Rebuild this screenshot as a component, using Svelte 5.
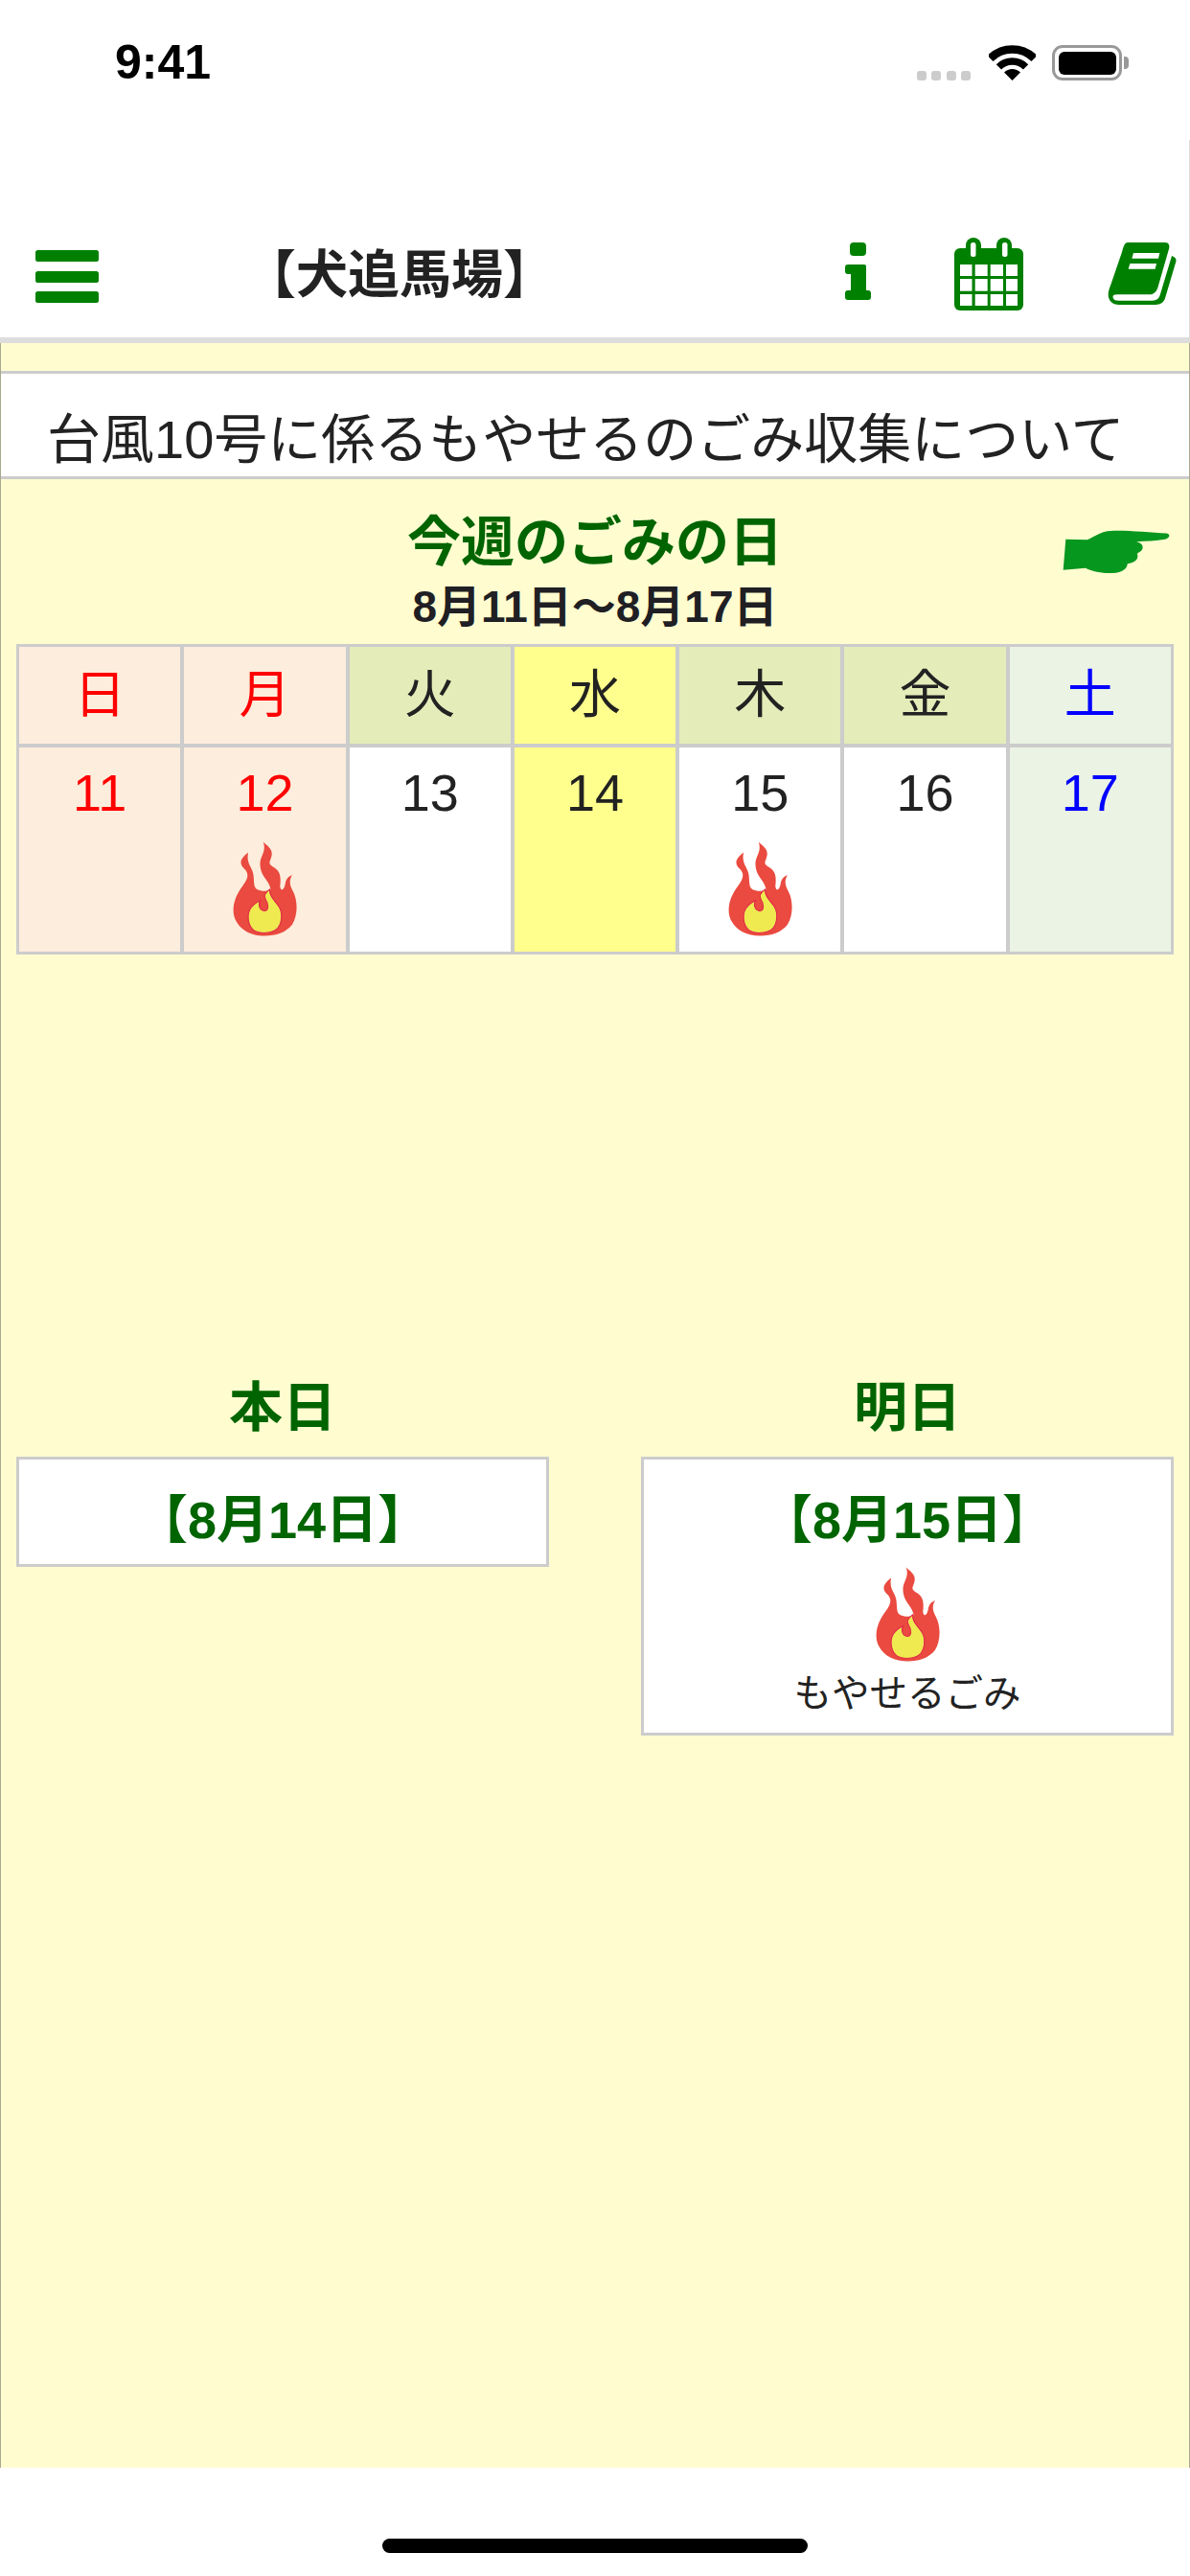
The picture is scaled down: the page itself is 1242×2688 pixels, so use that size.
<script>
  const days = [
    { w: '日', d: 11, kind: 'sun' },
    { w: '月', d: 12, kind: 'sun', fire: true },
    { w: '火', d: 13, kind: 'plain' },
    { w: '水', d: 14, kind: 'today' },
    { w: '木', d: 15, kind: 'plain', fire: true },
    { w: '金', d: 16, kind: 'plain' },
    { w: '土', d: 17, kind: 'sat' }
  ];
</script>

{#snippet flame()}
  <svg class="flame" viewBox="65 57 200 293" aria-hidden="true">
    <path fill="#ea4a3f" d="M160 57C172 70 190 78 186 100C182 120 172 122 190 135C215 148 215 170 212 195C214 212 224 208 228 190C230 172 238 165 250 160C238 180 244 195 252 210C268 240 268 285 250 315C230 340 200 350 165 350C125 350 90 335 73 300C58 265 72 225 95 195C112 172 115 160 105 145C88 130 80 115 113 90C108 115 115 125 125 145C135 165 125 195 140 205C155 212 172 212 183 205C178 175 150 165 150 125C150 100 170 90 160 57Z"/>
    <path fill="#eeea50" stroke="#e0264a" stroke-width="3" d="M180 205C178 225 195 240 208 258C222 280 218 315 200 330C185 342 150 345 130 332C112 318 108 285 120 265C128 252 140 245 150 240C142 255 150 272 165 272C178 270 176 250 168 238C160 225 170 212 180 205Z"/>
  </svg>
{/snippet}

<div class="screen">
  <div class="status">
    <span class="time">9:41</span>
    <div class="status-icons">
      <div class="dots"><i></i><i></i><i></i><i></i></div>
      <svg class="wifi" viewBox="0 0 49 37" aria-hidden="true">
        <path d="M1.5 14A32.5 32.5 0 0 1 47.5 14" fill="none" stroke="#000" stroke-width="8.5"/>
        <path d="M10.4 22.9A20 20 0 0 1 38.6 22.9" fill="none" stroke="#000" stroke-width="7.5"/>
        <path d="M24.5 37L16 28.5A12 12 0 0 1 33 28.5Z" fill="#000"/>
      </svg>
      <div class="battery"><div class="battery-fill"></div></div>
      <div class="battery-nub"></div>
    </div>
  </div>

  <main>
    <header>
      <div class="burger"><i></i><i></i><i></i></div>
      <h1>【犬追馬場】</h1>
      <svg class="ico-info" viewBox="0 0 27 60" aria-hidden="true">
        <rect x="5" y="0" width="17" height="14" rx="4" fill="#008000"/>
        <path fill="#008000" d="M3 23H20Q22 23 22 25V50H24Q27 50 27 53V57Q27 60 24 60H3Q0 60 0 57V53Q0 50 3 50H6V33H3Q0 33 0 30V26Q0 23 3 23Z"/>
      </svg>
      <svg class="ico-cal" viewBox="0 0 72 76" aria-hidden="true">
        <rect x="0" y="11" width="72" height="65" rx="6" fill="#008000"/>
        <rect x="12" y="0" width="16" height="24" rx="8" fill="#008000"/>
        <rect x="44" y="0" width="16" height="24" rx="8" fill="#008000"/>
        <g fill="#fff">
          <rect x="17" y="5" width="5.5" height="15" rx="2.5"/>
          <rect x="50" y="5" width="5.5" height="15" rx="2.5"/>
          <rect x="6" y="28" width="12.5" height="12"/><rect x="21.7" y="28" width="13" height="12"/><rect x="37.7" y="28" width="13.3" height="12"/><rect x="54" y="28" width="12" height="12"/>
          <rect x="6" y="43" width="12.5" height="12.7"/><rect x="21.7" y="43" width="13" height="12.7"/><rect x="37.7" y="43" width="13.3" height="12.7"/><rect x="54" y="43" width="12" height="12.7"/>
          <rect x="6" y="59" width="12.5" height="12"/><rect x="21.7" y="59" width="13" height="12"/><rect x="37.7" y="59" width="13.3" height="12"/><rect x="54" y="59" width="12" height="12"/>
        </g>
      </svg>
      <svg class="ico-book" viewBox="1065 130 216 195" aria-hidden="true">
        <path fill="#008000" d="M1128 130H1245C1257 130 1260 140 1257 150L1224 265C1220 282 1212 293 1195 293H1095C1085 293 1080 296 1082 303C1085 310 1090 312 1100 312H1205C1218 312 1225 306 1229 295L1266 172C1274 175 1282 180 1279 190L1245 305C1241 318 1230 325 1215 325H1100C1080 325 1067 312 1067 292C1067 285 1070 275 1075 262L1110 160C1114 145 1118 130 1128 130Z"/>
        <path fill="#fff" d="M1146 163H1228L1224 180H1141ZM1135 196H1218L1214 213H1130Z"/>
      </svg>
    </header>

    <div class="notice">台風10号に係るもやせるのごみ収集について</div>

    <section class="week">
      <h2>今週のごみの日</h2>
      <p class="range">8月11日〜8月17日</p>
      <svg class="hand" viewBox="208 98 340 137" aria-hidden="true">
        <path fill="#06971f" d="M218 127L285 128C305 120 330 100 360 100C400 97 480 105 535 108C548 112 545 122 530 127C500 132 470 133 440 134C458 138 465 150 455 163L442 172C448 185 440 200 412 203C410 225 385 233 355 233C330 233 300 228 280 217L210 223Z"/>
      </svg>
    </section>

    <div class="calendar">
      {#each days as day}
        <div class="cell head {day.kind}">{day.w}</div>
      {/each}
      {#each days as day}
        <div class="cell body {day.kind}">
          <span class="num">{day.d}</span>
          {#if day.fire}{@render flame()}{/if}
        </div>
      {/each}
    </div>

    <div class="cards">
      <div class="col">
        <h3>本日</h3>
        <div class="card">
          <div class="card-date">【8月14日】</div>
        </div>
      </div>
      <div class="col">
        <h3>明日</h3>
        <div class="card">
          <div class="card-date">【8月15日】</div>
          <div class="card-fire">{@render flame()}</div>
          <div class="card-label">もやせるごみ</div>
        </div>
      </div>
    </div>
  </main>

  <footer><div class="home"></div></footer>
</div>

<style>
  :global(body) { margin: 0; background: #fff; }
  .screen {
    width: 1242px; height: 2688px; display: flex; flex-direction: column;
    font-family: "Liberation Sans", "Noto Sans CJK JP", sans-serif; color: #222;
    overflow: hidden;
  }
  .status { height: 146px; display: flex; justify-content: space-between; box-sizing: border-box; padding: 0 64px 0 120px; flex: none; }
  .time { font-size: 50px; font-weight: 700; line-height: 56px; margin-top: 37px; color: #000; }
  .status-icons { display: flex; align-items: flex-start; padding-top: 47px; }
  .dots { display: flex; gap: 5.5px; margin-top: 27px; margin-right: 19px; }
  .dots i { width: 10px; height: 9.5px; border-radius: 3px; background: #ccc; display: block; }
  .wifi { width: 49px; height: 37px; margin-right: 17px; }
  .battery { width: 73px; height: 37px; box-sizing: border-box; border: 3.5px solid #999; border-radius: 11px; padding: 3.5px; background: #fff; }
  .battery-fill { width: 100%; height: 100%; background: #000; border-radius: 6px; }
  .battery-nub { width: 5px; height: 13px; background: #999; border-radius: 0 4px 4px 0; margin: 12px 0 0 2px; }

  main {
    flex: 1; background: #fffcd0;
    border-left: 1px solid #a9a98f; border-right: 1px solid #a9a98f;
  }
  header {
    background: #fff; border-bottom: 6px solid #ddd; border-right: 1px solid #ddd; height: 212px; box-sizing: border-box;
    display: flex; align-items: flex-start; padding: 102px 13px 0 37px; margin: 0 -1px;
  }
  .burger { width: 66px; height: 55px; margin-top: 13px; display: flex; flex-direction: column; justify-content: space-between; flex: none; }
  .burger i { display: block; height: 12px; background: #008000; border-radius: 2.5px; }
  h1 { margin: 7px 0 0 152px; font-size: 54px; line-height: 64px; font-weight: 700; color: #222; white-space: nowrap; flex: 1; }
  .ico-info { width: 27px; height: 60px; margin: 5px 0 0 0; flex: none; }
  .ico-cal { width: 72px; height: 76px; margin: 0 0 0 87px; flex: none; }
  .ico-book { width: 72px; height: 65px; margin: 5px 0 0 88px; flex: none; }

  .notice {
    margin-top: 29px; background: #fff; border-top: 3px solid #ccc; border-bottom: 3px solid #ccc;
    height: 113px; box-sizing: border-box; padding: 32px 0 0 48px;
    font-size: 56px; line-height: 74px; white-space: nowrap; overflow: hidden; color: #222;
  }

  .week { position: relative; text-align: center; height: 172px; }
  h2 { margin: 0; padding-top: 32px; font-size: 56px; line-height: 68px; color: #006400; font-weight: 700; }
  .range { margin: 7px 0 0; font-size: 46px; line-height: 52px; font-weight: 700; color: #1f1f24; }
  .hand { position: absolute; left: 1108px; top: 53px; width: 113px; height: 46px; }

  .calendar {
    margin: 0 16px; background: #ccc; padding: 3px; display: grid; gap: 4px;
    grid-template-columns: repeat(7, 1fr); grid-template-rows: 101px 213px;
  }
  .cell { text-align: center; color: #222; }
  .head { font-size: 54px; line-height: 101px; }
  .head.plain { background: #e4ecb9; }
  .head.today { background: #ffff8d; }
  .body { display: flex; flex-direction: column; align-items: center; background: #fff; }
  .body.today { background: #ffff8d; }
  .cell.sun { background: #fdeddc; color: #f00; }
  .cell.sat { background: #ebf3e4; color: #00f; }
  .num { font-size: 54px; line-height: 60px; margin-top: 17px; }
  .flame { width: 67px; height: 99px; display: block; flex: none; }
  .body .flame { margin-top: 21px; }

  .cards { display: flex; justify-content: space-between; align-items: flex-start; margin: 0 16px; padding-top: 439px; }
  .col { width: 556px; }
  h3 { margin: 0; text-align: center; font-size: 56px; line-height: 68px; color: #006400; font-weight: 700; height: 85px; }
  .card { background: #fff; border: 3px solid #ccc; padding: 24px 0 7px; text-align: center; }
  .card-date { font-size: 54px; line-height: 78px; font-weight: 700; color: #006400; }
  .card-fire { display: flex; justify-content: center; margin-top: 10px; }
  .card-label { font-size: 39.5px; line-height: 50px; margin-top: 8px; color: #222; padding-bottom: 9px; }

  footer { height: 113px; flex: none; background: #fff; box-sizing: border-box; padding-top: 74px; }
  .home { width: 444px; height: 15px; margin: 0 auto; background: #000; border-radius: 8px; }
</style>
